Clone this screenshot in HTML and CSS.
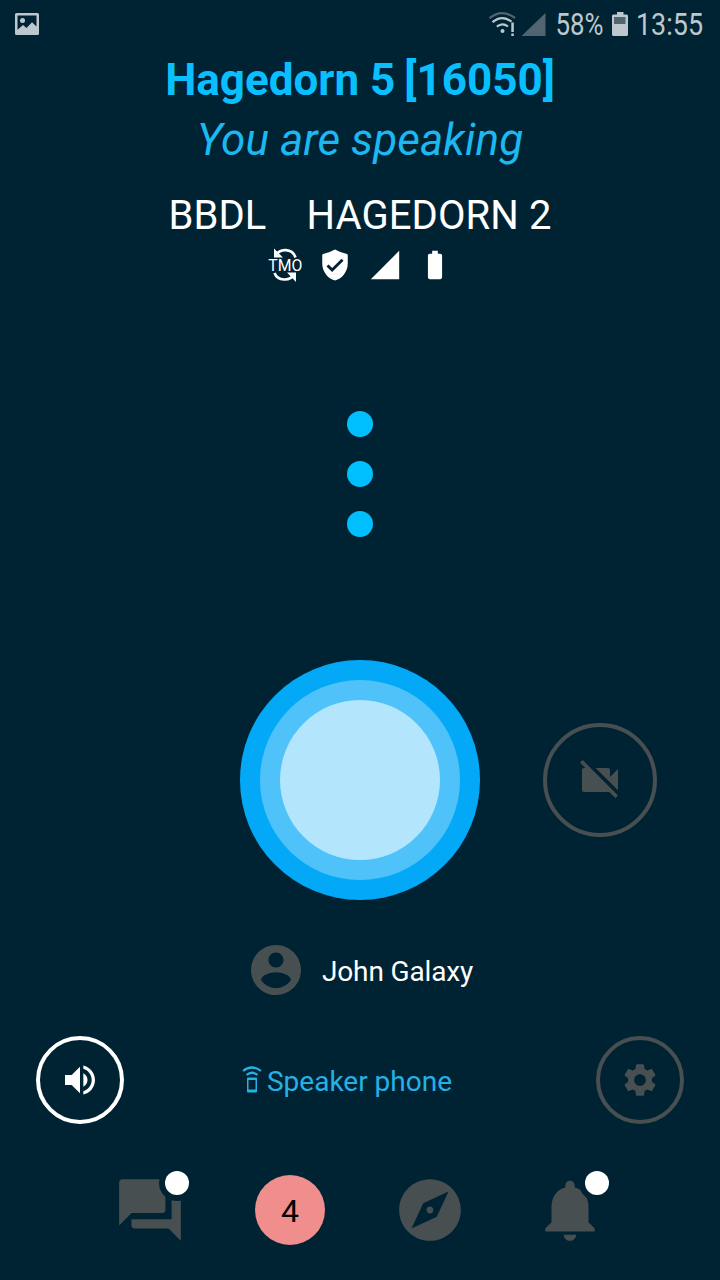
FILE: index.html
```html
<!DOCTYPE html>
<html lang="en">
<head>
  <meta charset="UTF-8" />
  <meta name="viewport" content="width=device-width, initial-scale=1.0" />
  <title>Push to Talk</title>
  <link rel="stylesheet" href="styles.css">
</head>
<body>
  <div class="screen">
    <div class="status-bar">
      <svg class="status-image" width="24" height="22" viewBox="0 0 24 22">
        <path fill-rule="evenodd" d="M1.500 0h21Q24 0 24 1.500v19q0 1.500-1.500 1.500h-21Q0 22 0 20.500v-19Q0 0 1.500 0zM2.500 2.500v14.200l5.500-4.700 3.500 3 5.500-5.700 4.500 4.200v-11z" />
        <circle cx="7.500" cy="7.500" r="2.500" />
      </svg>
      <svg class="status-right" width="220" height="40" viewBox="0 0 220 40">
        <g fill="none" stroke-width="2.200">
          <path class="dim-stroke" d="M1.500 13.200Q14 3.200 27 13" />
          <path d="M4.500 17.200Q14 9.200 23.500 16.700M8.800 21.700Q14.300 17 20 21.500" />
        </g>
        <circle cx="14.500" cy="26" r="2" />
        <path d="M23.300 17.500h2.500v9.500h-2.500zM23.300 28.500h2.500v2.500h-2.500z" />
        <path class="dim-fill" d="M57.500 8v23H33.500z" />
        <text x="67.500" y="30" textLength="48" lengthAdjust="spacingAndGlyphs">58%</text>
        <path fill-rule="evenodd" d="M129 7h6.500v2.500h3q1.500 0 1.500 1.500v18.500q0 1.500-1.500 1.500h-13q-1.500 0-1.500-1.500V11q0-1.500 1.500-1.500h3.500z" />
        <path class="battery-gap" d="M126 12h11.500v7h-11.500z" />
        <text x="148" y="30" textLength="67" lengthAdjust="spacingAndGlyphs">13:55</text>
      </svg>
    </div>

    <div class="call-info">
      <div class="group-name"><span>Hagedorn 5</span><span>[16050]</span></div>
      <div class="call-state">You are speaking</div>
      <div class="station"><span>BBDL</span><span>HAGEDORN 2</span></div>
      <div class="indicators">
        <svg width="38" height="34" viewBox="-2 0 38 34">
          <path fill="none" stroke="#fff" stroke-width="2.600" d="M7 8C12-.5 24.500.3 27.500 9.500M27 25.500C22 34 9.500 33 6.500 25" />
          <path d="M6 .5V9.500h9zM28 34v-9.500h-9z" />
          <text class="mode" x="0.300" y="22.800" textLength="34" lengthAdjust="spacingAndGlyphs">TMO</text>
        </svg>
        <svg width="34" height="34" viewBox="0 0 24 24">
          <path d="M12 1Q8 3.200 3.600 4.200Q3 4.400 3 5v6c0 5.550 3.840 10.740 9 12 5.160-1.260 9-6.450 9-12V5q0-.6-.6-.8Q16 3.200 12 1zm-2 16l-4-4 1.410-1.410L10 14.170l6.590-6.590L18 9l-8 8z" />
        </svg>
        <svg width="34" height="34" viewBox="0 0 24 24">
          <path d="M2 22h20V2z" />
        </svg>
        <svg width="34" height="34" viewBox="0 0 24 24">
          <path d="M15.670 4H14V2h-4v2H8.330C7.600 4 7 4.600 7 5.330v15.330C7 21.400 7.600 22 8.330 22h7.330c.74 0 1.340-.6 1.340-1.330V5.330C17 4.600 16.400 4 15.670 4z" />
        </svg>
      </div>
    </div>

    <div class="dots">
      <span class="dot"></span>
      <span class="dot"></span>
      <span class="dot"></span>
    </div>

    <div class="talk-row">
      <button class="talk-button" aria-label="Talk"><span class="talk-ring"><span class="talk-core"></span></span></button>
      <button class="round-button video" aria-label="Video off">
        <svg width="48" height="48" viewBox="0 0 24 24">
          <path d="M21 6.500l-4 4V7c0-.55-.45-1-1-1H9.820L21 17.180V6.500zM3.270 2L2 3.270 4.730 6H4c-.55 0-1 .45-1 1v10c0 .55.45 1 1 1h12c.21 0 .39-.08.54-.18L19.730 21 21 19.730 3.270 2z" />
        </svg>
      </button>
    </div>

    <div class="user">
      <svg width="60" height="60" viewBox="0 0 24 24">
        <path d="M12 2C6.480 2 2 6.480 2 12s4.480 10 10 10 10-4.480 10-10S17.520 2 12 2zm0 3c1.660 0 3 1.340 3 3s-1.340 3-3 3-3-1.340-3-3 1.340-3 3-3zm0 14.200c-2.500 0-4.710-1.280-6-3.220.03-1.990 4-3.080 6-3.080 1.990 0 5.970 1.090 6 3.080-1.290 1.940-3.500 3.220-6 3.220z" />
      </svg>
      <span>John Galaxy</span>
    </div>

    <div class="controls">
      <button class="round-button active" aria-label="Volume">
        <svg width="40" height="40" viewBox="0 0 24 24">
          <path d="M3 9v6h4l5 5V4L7 9H3zm13.500 3c0-1.770-1.020-3.290-2.500-4.030v8.050c1.480-.73 2.500-2.250 2.500-4.020zM14 3.230v2.060c2.890.86 5 3.540 5 6.710s-2.110 5.850-5 6.710v2.060c4.010-.91 7-4.490 7-8.770s-2.990-7.860-7-8.770z" />
        </svg>
      </button>
      <div class="output">
        <svg width="20" height="28" viewBox="0 0 20 28">
          <path fill="none" stroke="currentColor" stroke-width="2.200" d="M1 5Q10-2 19 5M4.500 9Q10 4.500 15.500 9" />
          <path fill-rule="evenodd" d="M6 11.500h8q1 0 1 1v13q0 1-1 1H6q-1 0-1-1v-13q0-1 1-1zM6.500 14v9.500h7V14z" />
        </svg>
        <span>Speaker phone</span>
      </div>
      <button class="round-button" aria-label="Settings">
        <svg width="38" height="38" viewBox="0 0 24 24">
          <path d="M19.430 12.980c.04-.32.07-.64.07-.98s-.03-.66-.07-.98l2.110-1.650c.19-.15.24-.42.12-.64l-2-3.460c-.12-.22-.39-.3-.61-.22l-2.490 1c-.52-.4-1.080-.73-1.690-.98l-.38-2.650C14.460 2.180 14.250 2 14 2h-4c-.25 0-.46.18-.49.42l-.38 2.650c-.61.25-1.170.59-1.690.98l-2.490-1c-.23-.09-.49 0-.61.22l-2 3.460c-.13.22-.07.49.12.64l2.110 1.650c-.04.32-.07.65-.07.98s.03.66.07.98l-2.110 1.650c-.19.15-.24.42-.12.64l2 3.460c.12.22.39.3.61.22l2.490-1c.52.4 1.080.73 1.690.98l.38 2.650c.03.24.24.42.49.42h4c.25 0 .46-.18.49-.42l.38-2.650c.61-.25 1.170-.59 1.690-.98l2.490 1c.23.09.49 0 .61-.22l2-3.460c.12-.22.07-.49-.12-.64l-2.110-1.650zM12 15.700c-2.040 0-3.700-1.660-3.700-3.700s1.660-3.700 3.700-3.700 3.700 1.660 3.700 3.700-1.660 3.700-3.700 3.700z" />
        </svg>
      </button>
    </div>

    <div class="bottom-nav">
      <div class="nav-item">
        <svg width="74" height="74" viewBox="0 0 24 24">
          <path d="M21 6h-2v9H6v2c0 .55.45 1 1 1h11l4 4V7c0-.55-.45-1-1-1zm-4 6V3c0-.55-.45-1-1-1H3c-.55 0-1 .45-1 1v14l4-4h10c.55 0 1-.45 1-1z" />
        </svg>
        <span class="badge"></span>
      </div>
      <div class="nav-item"><span class="count">4</span></div>
      <div class="nav-item">
        <svg width="74" height="74" viewBox="0 0 24 24">
          <path d="M12 10.900c-.61 0-1.100.49-1.100 1.100s.49 1.100 1.100 1.100c.61 0 1.100-.49 1.100-1.100s-.49-1.100-1.100-1.100zM12 2C6.480 2 2 6.480 2 12s4.480 10 10 10 10-4.480 10-10S17.520 2 12 2zm2.190 12.190L6 18l3.810-8.190L18 6l-3.810 8.190z" />
        </svg>
      </div>
      <div class="nav-item">
        <svg width="74" height="74" viewBox="0 0 24 24">
          <path d="M12 22c1.100 0 2-.9 2-2h-4c0 1.100.89 2 2 2zm6-6v-5c0-3.070-1.640-5.640-4.500-6.320V4c0-.83-.67-1.500-1.500-1.500s-1.500.67-1.500 1.500v.68C7.630 5.360 6 7.920 6 11v5l-2 2v1h16v-1l-2-2z" />
        </svg>
        <span class="badge"></span>
      </div>
    </div>
  </div>
</body>
</html>
```
FILE: styles.css
```css
* {
  box-sizing: border-box;
}
body {
  margin: 0;
  font-family: Roboto, sans-serif;
  background-color: #002333;
  color: #ffffff;
}
svg {
  display: block;
  flex-shrink: 0;
  fill: currentColor;
}
button {
  padding: 0;
  border: none;
  background: none;
  cursor: pointer;
}
.screen {
  width: 720px;
  height: 1280px;
  display: flex;
  flex-direction: column;
  overflow: hidden;
}
.status-bar {
  height: 50px;
  padding: 5px 12px 0 15px;
  display: flex;
  justify-content: space-between;
  color: #bcc8cd;
}
.status-image {
  margin-top: 8px;
}
.status-right {
  font-size: 31px;
  stroke: none;
}
.status-right g {
  stroke: currentColor;
}
.status-right .dim-stroke {
  stroke: #4f6672;
}
.dim-fill,
.battery-gap {
  fill: #4f6672;
}
.call-info {
  height: 232px;
  text-align: center;
}
.group-name {
  display: flex;
  justify-content: center;
  gap: 9px;
  height: 60px;
  line-height: 61px;
  font-size: 44px;
  font-weight: bold;
  color: #0abfff;
}
.call-state {
  height: 60px;
  line-height: 60px;
  font-size: 44px;
  font-style: italic;
  letter-spacing: 0.1px;
  color: #1cb8f0;
}
.station {
  display: flex;
  justify-content: center;
  gap: 40px;
  height: 78px;
  line-height: 92px;
  font-size: 40px;
  letter-spacing: 0.1px;
}
.indicators {
  display: flex;
  justify-content: center;
  gap: 16px;
}
.indicators svg:first-child {
  margin: 0 -2px;
}
.mode {
  font-size: 17px;
}
.dots {
  height: 378px;
  padding-top: 129px;
  display: flex;
  flex-direction: column;
  align-items: center;
  gap: 24px;
}
.dot {
  width: 26px;
  height: 26px;
  border-radius: 50%;
  background-color: #00bfff;
}
.talk-row {
  height: 240px;
  display: grid;
  grid-template-columns: repeat(3, 240px);
  align-items: center;
  justify-items: center;
}
.talk-button,
.talk-ring {
  display: flex;
  align-items: center;
  justify-content: center;
  border-radius: 50%;
}
.talk-button {
  grid-column: 2;
  width: 240px;
  height: 240px;
  background-color: #03a9f7;
}
.talk-ring {
  width: 200px;
  height: 200px;
  background-color: #4fc3f9;
}
.talk-core {
  width: 160px;
  height: 160px;
  border-radius: 50%;
  background-color: #b3e6fd;
}
.round-button {
  display: flex;
  align-items: center;
  justify-content: center;
  width: 88px;
  height: 88px;
  border: 4px solid #484f51;
  border-radius: 50%;
  color: #484f51;
}
.round-button.video {
  width: 114px;
  height: 114px;
}
.round-button.active {
  border-color: #ffffff;
  color: #ffffff;
}
.user {
  height: 136px;
  padding: 40px 0 0 246px;
  display: flex;
  gap: 16px;
  line-height: 64px;
  font-size: 28px;
  letter-spacing: -0.15px;
}
.user svg {
  color: #484f51;
}
.controls {
  height: 88px;
  padding: 0 36px;
  display: flex;
  align-items: center;
  justify-content: space-between;
}
.output {
  display: flex;
  align-items: center;
  gap: 5px;
  margin-right: 26px;
  font-size: 28px;
  color: #26b0e4;
}
.output span {
  padding-top: 2px;
}
.bottom-nav {
  padding: 49px 80px 0;
  display: grid;
  grid-template-columns: repeat(4, 140px);
}
.nav-item {
  position: relative;
  height: 74px;
  display: flex;
  align-items: center;
  justify-content: center;
  color: #484f51;
}
.badge {
  position: absolute;
  top: -2px;
  left: 85px;
  width: 24px;
  height: 24px;
  border-radius: 50%;
  background-color: #ffffff;
  box-shadow: 0 0 0 6px #002333;
}
.count {
  width: 70px;
  height: 70px;
  border-radius: 50%;
  background-color: #f08d8d;
  color: #000000;
  font-size: 32px;
  line-height: 72px;
  text-align: center;
}
```
